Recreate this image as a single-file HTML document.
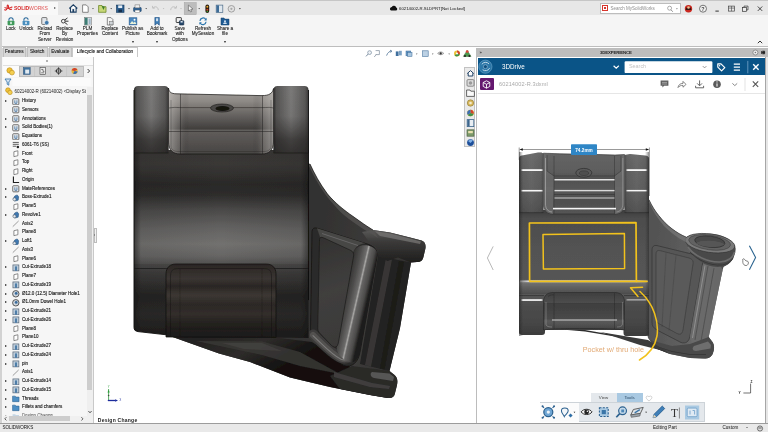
<!DOCTYPE html>
<html lang="en">
<head>
<meta charset="utf-8">
<title>SOLIDWORKS - 60214002-R.SLDPRT</title>
<style>
*{box-sizing:border-box;margin:0;padding:0}
html,body{width:768px;height:432px;overflow:hidden;background:#fff}
body{font-family:"Liberation Sans",sans-serif;color:#222;position:relative}
.abs{position:absolute}
#titlebar{left:0;top:0;width:768px;height:15px;background:#e7e7e7;border-top:1.5px solid #c6c6c6}
#logo{left:2px;top:1.5px;width:56px;height:13px;background:#f8f8f8}
#ribbon{left:0;top:15px;width:768px;height:32.400px;background:#f5f5f5;border-bottom:1px solid #bdbdbd}
#leftedge{left:0;top:0;width:2px;height:423px;background:#d2d2d2}
.rb{-webkit-text-stroke:.1px #222;position:absolute;top:0;width:30px;margin-left:-15px;text-align:center;font-size:4.600px;line-height:5.300px;color:#1c1c1c;white-space:nowrap}
.rb svg{display:block;margin:2.2px auto 0.2px;width:10px;height:8.6px}
.rb b{position:absolute;left:0;width:30px;top:25px;font-weight:normal;font-size:3.500px;line-height:4px;color:#333}
#tabs{left:2px;top:47.400px;height:9.5px;width:136px}
.tab{-webkit-text-stroke:.12px #222;position:absolute;top:0;height:9.200px;background:#d8d8d8;border:0.5px solid #c0c0c0;border-bottom:none;font-size:4.700px;line-height:8.600px;text-align:center;color:#222;white-space:nowrap}
.tab.on{background:#fff;border-color:#c8c8c8;color:#111}
#lpanel{left:2px;top:57px;width:91.5px;height:366px;background:#f6f6f6;border-right:1px solid #c9c9c9}
.tr{position:absolute;left:0;height:8.75px;width:88px;white-space:nowrap;overflow:hidden;font-size:4.500px;line-height:8.750px;color:#111;-webkit-text-stroke:.12px #222}
.tr span{position:absolute;left:22px;top:0}
.tr .ti{position:absolute;left:12.2px;top:0.7px;width:7.6px;height:7.6px}
.tr .ex{position:absolute;left:5.4px;top:3.2px;width:0;height:0;border-left:2.1px solid #222;border-top:1.5px solid transparent;border-bottom:1.5px solid transparent}
#status{left:0;top:422.5px;width:768px;height:9.5px;background:#e9e9e9;border-top:1px solid #9c9c9c;font-size:4.6px;line-height:8.5px;color:#111}
#xp{left:475.5px;top:47.5px;width:292.5px;height:375px;background:#fff;border-left:1px solid #bcbcbc}
#xphead{left:476px;top:47.5px;width:292px;height:9px;background:#bdbdbd;font-size:4.3px;line-height:9px;font-weight:bold;color:#222}
#xpblue{left:478px;top:57.5px;width:288px;height:17.5px;background:#0a5487}
#xpright{left:765.400px;top:57px;width:2.600px;height:365.500px;background:#e6e6e6;border-left:0.900px solid #a6a6a6}
.vt{position:absolute;left:463.5px;top:67px;width:11.5px;height:80px;background:#eaeaea;border:0.5px solid #c2c2c2}
.vt i{position:absolute;left:1.5px;width:8px;height:8px;border-radius:1.5px}
</style>
</head>
<body>
<div id="app" style="position:absolute;left:0;top:0;width:768px;height:432px;overflow:hidden;will-change:transform;opacity:.999">
<!-- ============ title bar ============ -->
<div id="titlebar" class="abs"></div>
<div id="logo" class="abs">
  <svg class="abs" style="left:1.5px;top:2.5px;width:9px;height:8px" viewBox="0 0 9 8"><path d="M0.6 5.8 C2.2 6.9 3.4 4.8 3.2 2.2 C3.1 0.8 4.3 0.6 4.4 2 C4.6 4.2 5 6.2 7.6 5.2 M1 3.6 C2.6 4.6 5.4 4.6 8 3" fill="none" stroke="#d62a2a" stroke-width="1.1" stroke-linecap="round"/></svg>
  <span class="abs" style="left:12px;top:2.6px;font-size:5.100px;line-height:8px;font-weight:bold;color:#d62828;letter-spacing:-0.1px">SOLID<span style="font-weight:normal;color:#e05555">WORKS</span></span>
  <i class="abs" style="left:52px;top:5.400px;border-left:2.2px solid #555;border-top:1.7px solid transparent;border-bottom:1.7px solid transparent"></i>
</div>
<svg class="abs" style="left:60px;top:1.5px;width:190px;height:13.5px" viewBox="60 1.5 190 13.5">
  <!-- home -->
  <path d="M69.3 8 L73.3 4.3 L77.3 8 M70.5 7.4 V11.6 H76.1 V7.4" fill="#fff" stroke="#1d3f63" stroke-width="1.1"/>
  <rect x="72.4" y="8.6" width="1.8" height="3" fill="#1d3f63"/>
  <!-- new -->
  <path d="M82.6 4.4 H86.2 L88.2 6.4 V11.8 H82.6 Z" fill="#fff" stroke="#6b6b6b" stroke-width=".8"/>
  <path d="M92.2 7.6 l1.6 0 l-.8 1.2z" fill="#444"/>
  <!-- open -->
  <path d="M98.6 5 H102 L103 6.2 H106 V11.8 H98.6 Z" fill="#c8d878" stroke="#6f8a2a" stroke-width=".8"/>
  <path d="M101.5 5.2 L104.8 6.2 L103.5 9.5 Z" fill="#3f7d2a"/>
  <path d="M110.4 7.6 l1.6 0 l-.8 1.2z" fill="#444"/>
  <!-- save -->
  <rect x="116.6" y="4.6" width="7.4" height="7.2" fill="#2d5f90" stroke="#183d62" stroke-width=".7"/>
  <rect x="118.2" y="4.9" width="4" height="2.6" fill="#e6eef6"/><rect x="118.4" y="9" width="3.6" height="2.6" fill="#16304d"/>
  <path d="M128.2 7.6 l1.6 0 l-.8 1.2z" fill="#444"/>
  <!-- print -->
  <rect x="133.6" y="7" width="7.6" height="4" rx=".6" fill="#2e6193" stroke="#1a4066" stroke-width=".6"/>
  <rect x="135" y="4.4" width="4.8" height="3" fill="#f2f2f2" stroke="#666" stroke-width=".5"/><rect x="135" y="9.6" width="4.8" height="2.4" fill="#fff" stroke="#666" stroke-width=".4"/>
  <path d="M145.4 7.6 l1.6 0 l-.8 1.2z" fill="#444"/>
  <!-- undo / redo (disabled) -->
  <path d="M153 7.4 C155 5.4 158 6 158.3 9.6 M152.4 5.4 L152.8 7.8 L155 7.4" fill="none" stroke="#c2c2c2" stroke-width="1"/>
  <path d="M162.8 7.6 l1.6 0 l-.8 1.2z" fill="#bbb"/>
  <path d="M176 7.4 C174 5.4 171 6 170.7 9.6 M176.6 5.4 L176.2 7.8 L174 7.4" fill="none" stroke="#c2c2c2" stroke-width="1"/>
  <path d="M180.2 7.6 l1.6 0 l-.8 1.2z" fill="#bbb"/>
  <!-- select -->
  <rect x="184.2" y="2" width="12" height="12.2" fill="#bdbdbd" stroke="#a5a5a5" stroke-width=".5"/>
  <path d="M188.4 4.6 L193 8.6 L190.8 8.9 L191.6 11 L190.4 11.4 L189.6 9.4 L188.4 10.6 Z" fill="#f4f4f4" stroke="#555" stroke-width=".6"/>
  <path d="M198.4 7.6 l1.6 0 l-.8 1.2z" fill="#444"/>
  <!-- traffic light -->
  <rect x="205.4" y="4" width="3.8" height="8.4" rx="1.9" fill="#2a1c10"/><circle cx="207.3" cy="6.2" r="1" fill="#f0b030"/><circle cx="207.3" cy="9.2" r="1" fill="#d84020"/><circle cx="207.3" cy="11" r=".7" fill="#3a3"/>
  <!-- panel -->
  <rect x="216.2" y="4.6" width="6.6" height="7.4" fill="#dfe7ee" stroke="#4c6b88" stroke-width=".7"/><rect x="216.4" y="4.8" width="2.6" height="7" fill="#3f6d97"/>
  <!-- options -->
  <circle cx="231.4" cy="8.3" r="3.3" fill="#e2e2e2" stroke="#9a9a9a" stroke-width=".9"/><circle cx="231.4" cy="8.3" r="1.1" fill="#a8a8a8"/>
  <path d="M239 7.6 l1.8 0 l-.9 1.3z" fill="#444"/>
</svg>
<!-- document title -->
<svg class="abs" style="left:388.5px;top:5px;width:9px;height:6px" viewBox="0 0 9 6"><path d="M2 5.6 H7.2 A1.6 1.6 0 0 0 7.2 2.6 A2.4 2.4 0 0 0 2.8 2 A1.9 1.9 0 0 0 2 5.6 Z" fill="#111"/></svg>
<span class="abs" style="left:399px;top:4.900px;font-size:4.300px;line-height:8px;color:#111;white-space:nowrap">60214002-R.SLDPRT[Not Locked]</span>
<!-- search -->
<div class="abs" style="left:600px;top:3px;width:80.5px;height:10.5px;background:#fff;border:0.5px solid #bdbdbd"></div>
<div class="abs" style="left:601.5px;top:4.6px;width:6.6px;height:6.6px;background:#d8352d"></div>
<div class="abs" style="left:603px;top:6px;width:3.6px;height:3.8px;border:.7px solid #fff"></div>
<span class="abs" style="left:610.500px;top:5px;font-size:4.500px;line-height:8px;color:#8c8c8c;white-space:nowrap">Search MySolidWorks</span>
<svg class="abs" style="left:666px;top:4.5px;width:14px;height:8px" viewBox="0 0 14 8"><circle cx="3.6" cy="3.2" r="2" fill="none" stroke="#8a8a8a" stroke-width=".7"/><path d="M5 4.8 L6.8 6.8" stroke="#8a8a8a" stroke-width=".9"/><path d="M10 3.2 l1.8 0 l-.9 1.3z" fill="#777"/></svg>
<!-- window buttons -->
<svg class="abs" style="left:682px;top:1.5px;width:86px;height:13.5px" viewBox="682 1.5 86 13.5">
  <circle cx="688.5" cy="8.2" r="3.7" fill="#c9271f"/><path d="M685.6 9.4 A2.9 2.9 0 0 1 691.4 9.4 Z" fill="#3a1510"/><circle cx="688.5" cy="7" r="1.3" fill="#f0c090"/>
  <circle cx="703" cy="8.2" r="3.5" fill="#f2f2f2" stroke="#555" stroke-width=".8"/>
  <text x="703" y="10.1" font-size="5.4" font-weight="bold" text-anchor="middle" fill="#444" font-family="Liberation Sans, sans-serif">?</text>
  <path d="M715.4 10.6 H718.8" stroke="#333" stroke-width="1"/>
  <rect x="728.6" y="5.6" width="5.8" height="5" fill="none" stroke="#444" stroke-width=".7"/><path d="M728.6 7.6 H734.4 M731.5 5.6 V10.6" stroke="#444" stroke-width=".6"/>
  <rect x="742.6" y="7" width="4" height="3.8" fill="#eee" stroke="#333" stroke-width=".7"/><path d="M744 7 V5.6 H748 V9.4 H746.6" fill="none" stroke="#333" stroke-width=".7"/>
  <path d="M757.8 6 L762.2 10.4 M762.2 6 L757.8 10.4" stroke="#333" stroke-width=".9"/>
</svg>

<!-- ============ ribbon ============ -->
<div id="ribbon" class="abs">
  <div class="rb" style="left:10.8px"><svg viewBox="0 0 10 9"><path d="M2.8 4 V3 A2.2 2.2 0 0 1 7.2 3 V4" fill="none" stroke="#2c6b9c" stroke-width="1.1"/><rect x="1.4" y="3.8" width="7.2" height="4.8" rx="1" fill="#3f9a5a"/><rect x="4.2" y="5" width="1.6" height="2.4" fill="#e8f4ea"/></svg>Lock</div>
  <div class="rb" style="left:26.4px"><svg viewBox="0 0 10 9"><path d="M2.8 4 V3 A2.2 2.2 0 0 1 7.2 3" fill="none" stroke="#2c6b9c" stroke-width="1.1"/><rect x="1.4" y="3.8" width="7.2" height="4.8" rx="1" fill="#4a8fbe"/><rect x="4.2" y="5" width="1.6" height="2.4" fill="#e8f0f8"/></svg>Unlock</div>
  <div class="rb" style="left:44.8px"><svg viewBox="0 0 10 9"><rect x="1.6" y="0.6" width="5.4" height="7.2" rx=".8" fill="#e3e6ea" stroke="#555" stroke-width=".8"/><circle cx="6.8" cy="6" r="2.3" fill="#3f78aa" stroke="#fff" stroke-width=".5"/></svg>Reload<br>From<br>Server</div>
  <div class="rb" style="left:64.6px"><svg viewBox="0 0 10 9"><path d="M7.6 1 L3 4.4 L7.6 8 M3 4.4 L8.6 4.4" fill="none" stroke="#2b2b2b" stroke-width="1"/><circle cx="3.2" cy="4.4" r="1.9" fill="#f4f4f4" stroke="#2b2b2b" stroke-width=".9"/></svg>Replace<br>By<br>Revision</div>
  <div class="rb" style="left:87.5px"><svg viewBox="0 0 10 9"><rect x="1.4" y="0.6" width="7.2" height="7.8" fill="#e8ecef" stroke="#777" stroke-width=".6"/><rect x="1.6" y="0.8" width="3" height="7.4" fill="#3d7d74"/><rect x="5.6" y="1.6" width="2.2" height="5.8" fill="#9db4c6"/></svg>PLM<br>Properties</div>
  <div class="rb" style="left:110px"><svg viewBox="0 0 10 9"><path d="M2.2 0.6 H6 L8 2.6 V8.4 H2.2 Z" fill="#f4f4f4" stroke="#666" stroke-width=".8"/><rect x="4.6" y="4.6" width="3.6" height="3.6" fill="#cfd4d8" stroke="#666" stroke-width=".5"/></svg>Replace<br>Content</div>
  <div class="rb" style="left:132.6px"><svg viewBox="0 0 10 9"><rect x="1" y="0.8" width="8" height="7.4" fill="#4a88bf" stroke="#2a5e92" stroke-width=".7"/><path d="M1.6 7.4 L4 4.2 L5.6 6 L7 4.8 L8.6 7.4 Z" fill="#e9f2d8"/><circle cx="6.6" cy="2.8" r="1" fill="#fff"/></svg>Publish as<br>Picture<b>▾</b></div>
  <div class="rb" style="left:157px"><svg viewBox="0 0 10 9"><path d="M2.8 0.4 H7.4 V8.6 L5.1 6.6 L2.8 8.6 Z" fill="#3f7fb8" stroke="#1f4f82" stroke-width=".7"/><rect x="4" y="1.4" width="2.2" height="3" fill="#cfe0f0"/></svg>Add to<br>Bookmark<b>▾</b></div>
  <div class="rb" style="left:179.8px"><svg viewBox="0 0 10 9"><rect x="1" y="0.6" width="5.4" height="5.2" rx=".6" fill="#f2f2f2" stroke="#222" stroke-width=".9"/><rect x="4.4" y="3.8" width="4.6" height="4.6" rx=".6" fill="#27496d" stroke="#14283f" stroke-width=".6"/><rect x="5.6" y="4.2" width="2.2" height="1.6" fill="#dfe8f0"/></svg>Save<br>with<br>Options</div>
  <div class="rb" style="left:203px"><svg viewBox="0 0 10 9"><path d="M1.8 4 A3.3 3.3 0 0 1 8 2.8 M8.2 5 A3.3 3.3 0 0 1 2 6.2" fill="none" stroke="#2d77ae" stroke-width="1.3"/><path d="M8.8 0.8 V3.6 H6.2 Z M1.2 8.2 V5.4 H3.8 Z" fill="#2d77ae"/></svg>Refresh<br>MySession</div>
  <div class="rb" style="left:225px"><svg viewBox="0 0 10 9"><path d="M0.8 1 H4 L4.8 2.2 H9.2 V8.4 H0.8 Z" fill="#1f5b94" stroke="#133e68" stroke-width=".5"/><circle cx="5" cy="4.4" r="1.1" fill="#cfe0f0"/><path d="M3 7.4 A2 1.8 0 0 1 7 7.4 Z" fill="#cfe0f0"/></svg>Share a<br>file<b>▾</b></div>
  <svg class="abs" style="left:757px;top:24.5px;width:6px;height:4px" viewBox="0 0 6 4"><path d="M0.8 3.2 L3 1 L5.2 3.2" fill="none" stroke="#333" stroke-width="1"/></svg>
</div>

<!-- ============ command manager tabs ============ -->
<div id="tabs" class="abs">
  <div style="position:absolute;left:0;top:0.500px;width:71px;height:8.700px;background:#d6d6d6"></div>
  <div class="tab" style="left:1px;width:22.5px">Features</div>
  <div class="tab" style="left:25px;width:20.5px">Sketch</div>
  <div class="tab" style="left:47px;width:22.5px">Evaluate</div>
  <div class="tab on" style="left:70px;width:66px">Lifecycle and Collaboration</div>
</div>

<!-- heads-up view toolbar -->
<svg class="abs" style="left:340px;top:48px;width:135px;height:12px" viewBox="340 48 135 12">
  <circle cx="369.6" cy="52.6" r="1.9" fill="#eef2f6" stroke="#7b8ea0" stroke-width=".7"/><path d="M368.2 54 L366 56.4" stroke="#7b8ea0" stroke-width="1"/>
  <path d="M375.6 50.6 H379.4 V54.6 H375.6 M374.2 57 L376.4 54.4" fill="none" stroke="#8a97a4" stroke-width=".8"/>
  <path d="M386.6 55.6 C387.4 52.6 389.8 51.2 391.4 51 M390 50.2 L391.8 51 L390.6 52.6" fill="none" stroke="#5d7e9e" stroke-width=".9"/>
  <rect x="395.8" y="51.4" width="2.8" height="4.6" fill="#3f6f9d"/><rect x="399" y="50.8" width="2.8" height="4.6" fill="#7aa0c2"/>
  <rect x="406" y="51" width="4.8" height="4.8" fill="#6a9cc8" stroke="#3a6a98" stroke-width=".5"/><rect x="407.6" y="52.4" width="4.4" height="4" fill="#a9c6df" stroke="#3a6a98" stroke-width=".5"/>
  <path d="M416 53.6 l1.5 0 l-.75 1.1z" fill="#555"/>
  <rect x="422.6" y="50.8" width="5.6" height="5.6" fill="#bcd1e4" stroke="#4a759d" stroke-width=".6"/>
  <path d="M432 53.6 l1.5 0 l-.75 1.1z" fill="#555"/>
  <path d="M437.6 53.4 C439.4 51.4 442 51.4 443.8 53.4 C442 55.2 439.4 55.2 437.6 53.4 Z" fill="#d9d9d9" stroke="#666" stroke-width=".5"/><circle cx="440.7" cy="53.4" r="1.1" fill="#333"/>
  <path d="M448.4 53.6 l1.5 0 l-.75 1.1z" fill="#555"/>
  <circle cx="457" cy="53.4" r="3" fill="#e8c33a"/><path d="M457 53.4 L457 50.4 A3 3 0 0 1 459.8 54.4 Z" fill="#d3432e"/><path d="M457 53.4 L459.8 54.4 A3 3 0 0 1 454.6 55.2 Z" fill="#3f8f4a"/><circle cx="457" cy="53.4" r="1" fill="#fff"/>
  <path d="M463.4 56.4 L467.2 50.4 L471 56.4 Z" fill="#4d9a4d" stroke="#2c5c2c" stroke-width=".5"/><circle cx="467.2" cy="51.6" r="1.4" fill="#d94a38"/><circle cx="465" cy="56" r="1" fill="#222"/><circle cx="469.4" cy="56" r="1" fill="#222"/>
</svg>

<!-- ============ left feature manager ============ -->
<div id="lpanel" class="abs"></div>
<div class="abs" style="left:2.5px;top:57px;width:90.5px;height:8.5px;background:#fbfbfb;border-bottom:0.5px solid #e0e0e0"></div>
<div class="abs" style="left:46px;top:60.3px;width:1.6px;height:1.6px;background:#999;border-radius:1px"></div>
<div class="abs" style="left:18.5px;top:65.5px;width:65px;height:11px;background:#d3d3d3;border:0.5px solid #bcbcbc"></div>
<div class="abs" style="left:3px;top:65.5px;width:15.5px;height:11.5px;background:#fbfbfb"></div>
<svg class="abs" style="left:2px;top:65px;width:92px;height:34px" viewBox="2 65 92 34">
  <path d="M34.6 66 V76.4 M50.6 66 V76.4 M66.6 66 V76.4" stroke="#bdbdbd" stroke-width=".5"/>
  <!-- part icons -->
  <circle cx="9.6" cy="70.4" r="2.7" fill="#f0c23a" stroke="#b98a14" stroke-width=".6"/><circle cx="12" cy="72.6" r="2.4" fill="#f4cf52" stroke="#b98a14" stroke-width=".6"/>
  <rect x="23.4" y="67.6" width="6.8" height="6.8" fill="#3f709c" stroke="#2a5178" stroke-width=".5"/><rect x="25.2" y="69.6" width="4" height="4" fill="#e3ebf2"/>
  <rect x="40" y="67.6" width="5.4" height="6.8" fill="#ededed" stroke="#444" stroke-width=".6"/><path d="M41.2 69.4 H43 V71.4 H44.4 M41.2 72.8 H44.2" stroke="#333" stroke-width=".6" fill="none"/>
  <circle cx="58.6" cy="71" r="2.3" fill="#f4f4f4" stroke="#222" stroke-width=".9"/><path d="M58.6 67.2 V74.8 M54.8 71 H62.4" stroke="#222" stroke-width=".7"/>
  <circle cx="74.6" cy="71" r="3.1" fill="#e5b93a"/><path d="M74.6 71 L71.6 70.2 A3.1 3.1 0 0 1 77.4 69.8 Z" fill="#d2402c"/><path d="M74.6 71 L77.6 71.6 A3.1 3.1 0 0 1 73 73.6 Z" fill="#3b6fb0"/>
  <path d="M87.6 69 L89.6 71 L87.6 73" fill="none" stroke="#222" stroke-width=".9"/>
  <!-- filter -->
  <path d="M5 79 H11 L8.8 82 V85.2 L7.2 84.2 V82 Z" fill="#dbe8f4" stroke="#2d6ea8" stroke-width=".8"/>
  <rect x="12.5" y="78" width="78" height="8" fill="#fbfbfb"/>
  <!-- root -->
  <circle cx="8" cy="90.2" r="2.4" fill="#f0c23a" stroke="#b98a14" stroke-width=".6"/><circle cx="10" cy="92.4" r="2.2" fill="#f4cf52" stroke="#b98a14" stroke-width=".6"/>
  <path d="M88 92.4 L89.6 90.6 L91.2 92.4" fill="none" stroke="#333" stroke-width=".8"/>
</svg>
<span class="abs" style="left:14.5px;top:87.6px;font-size:4.5px;line-height:8px;color:#202020;white-space:nowrap;letter-spacing:-0.05px">60214002-R (60214002) &lt;Display St</span>
<div class="abs" style="left:2.5px;top:95.5px;width:85px;height:320.500px;overflow:hidden">
 <div style="position:absolute;left:-2.5px;top:-95.5px">
<div class="tr" style="top:97.00px"><i class="ex"></i><svg class="ti" viewBox="0 0 8 8"><rect x="0.8" y="0.8" width="6.4" height="6.4" rx=".8" fill="#f2f2f2" stroke="#555" stroke-width=".9"/><path d="M3 2.4 V5.6 H5.2 V2.4" fill="none" stroke="#3d6f9e" stroke-width=".9"/></svg><span>History</span></div>
<div class="tr" style="top:105.75px"><svg class="ti" viewBox="0 0 8 8"><rect x="0.8" y="0.8" width="6.4" height="6.4" rx=".8" fill="#f2f2f2" stroke="#555" stroke-width=".9"/><path d="M3 2.4 V5.6 H5.2 V2.4" fill="none" stroke="#3d6f9e" stroke-width=".9"/></svg><span>Sensors</span></div>
<div class="tr" style="top:114.50px"><i class="ex"></i><svg class="ti" viewBox="0 0 8 8"><rect x="0.8" y="0.8" width="6.4" height="6.4" rx=".8" fill="#f2f2f2" stroke="#555" stroke-width=".9"/><path d="M3 2.4 V5.6 H5.2 V2.4" fill="none" stroke="#3d6f9e" stroke-width=".9"/></svg><span>Annotations</span></div>
<div class="tr" style="top:123.25px"><i class="ex"></i><svg class="ti" viewBox="0 0 8 8"><rect x="0.8" y="0.8" width="6.4" height="6.4" rx=".8" fill="#f2f2f2" stroke="#555" stroke-width=".9"/><path d="M3 2.4 V5.6 H5.2 V2.4" fill="none" stroke="#3d6f9e" stroke-width=".9"/></svg><span>Solid Bodies(1)</span></div>
<div class="tr" style="top:132.00px"><svg class="ti" viewBox="0 0 8 8"><rect x="0.8" y="0.8" width="6.4" height="6.4" rx=".8" fill="#f2f2f2" stroke="#555" stroke-width=".9"/><path d="M3 2.4 V5.6 H5.2 V2.4" fill="none" stroke="#3d6f9e" stroke-width=".9"/></svg><span>Equations</span></div>
<div class="tr" style="top:140.75px"><svg class="ti" viewBox="0 0 8 8"><path d="M0.8 1.5 H7.2 M0.8 3.5 H7.2 M0.8 5.5 H4.5" stroke="#444" stroke-width=".9"/><circle cx="6.2" cy="6.3" r="1.3" fill="#222"/></svg><span>6061-T6 (SS)</span></div>
<div class="tr" style="top:149.50px"><svg class="ti" viewBox="0 0 8 8"><path d="M2 1.8 L6.2 0.8 V6 L2 7 Z" fill="#fff" stroke="#6a6a6a" stroke-width=".8"/></svg><span>Front</span></div>
<div class="tr" style="top:158.25px"><svg class="ti" viewBox="0 0 8 8"><path d="M2 1.8 L6.2 0.8 V6 L2 7 Z" fill="#fff" stroke="#6a6a6a" stroke-width=".8"/></svg><span>Top</span></div>
<div class="tr" style="top:167.00px"><svg class="ti" viewBox="0 0 8 8"><path d="M2 1.8 L6.2 0.8 V6 L2 7 Z" fill="#fff" stroke="#6a6a6a" stroke-width=".8"/></svg><span>Right</span></div>
<div class="tr" style="top:175.75px"><svg class="ti" viewBox="0 0 8 8"><path d="M1.5 0.5 V6.8 H7.5" fill="none" stroke="#222" stroke-width="1.2"/></svg><span>Origin</span></div>
<div class="tr" style="top:184.50px"><i class="ex"></i><svg class="ti" viewBox="0 0 8 8"><rect x="0.8" y="0.8" width="6.4" height="6.4" rx=".8" fill="#f2f2f2" stroke="#555" stroke-width=".9"/><path d="M3 2.4 V5.6 H5.2 V2.4" fill="none" stroke="#3d6f9e" stroke-width=".9"/></svg><span>MateReferences</span></div>
<div class="tr" style="top:193.25px"><i class="ex"></i><svg class="ti" viewBox="0 0 8 8"><path d="M1 5.5 L3 2 L5.5 1 L7 3 L6.5 6.5 L3 7.5 Z" fill="#3f78b0" stroke="#24507c" stroke-width=".6"/><circle cx="2.6" cy="5.6" r="1.6" fill="#dfe8f2" stroke="#555" stroke-width=".5"/></svg><span>Boss-Extrude1</span></div>
<div class="tr" style="top:202.00px"><svg class="ti" viewBox="0 0 8 8"><path d="M2 1.8 L6.2 0.8 V6 L2 7 Z" fill="#fff" stroke="#6a6a6a" stroke-width=".8"/></svg><span>Plane5</span></div>
<div class="tr" style="top:210.75px"><i class="ex"></i><svg class="ti" viewBox="0 0 8 8"><path d="M1 5.5 L3 2 L5.5 1 L7 3 L6.5 6.5 L3 7.5 Z" fill="#3f78b0" stroke="#24507c" stroke-width=".6"/><circle cx="2.6" cy="5.6" r="1.6" fill="#dfe8f2" stroke="#555" stroke-width=".5"/></svg><span>Revolve1</span></div>
<div class="tr" style="top:219.50px"><svg class="ti" viewBox="0 0 8 8"><path d="M0.8 7 L7 1" stroke="#707070" stroke-width=".7"/></svg><span>Axis2</span></div>
<div class="tr" style="top:228.25px"><svg class="ti" viewBox="0 0 8 8"><path d="M2 1.8 L6.2 0.8 V6 L2 7 Z" fill="#fff" stroke="#6a6a6a" stroke-width=".8"/></svg><span>Plane8</span></div>
<div class="tr" style="top:237.00px"><i class="ex"></i><svg class="ti" viewBox="0 0 8 8"><path d="M1 5.5 L3 2 L5.5 1 L7 3 L6.5 6.5 L3 7.5 Z" fill="#3f78b0" stroke="#24507c" stroke-width=".6"/><circle cx="2.6" cy="5.6" r="1.6" fill="#dfe8f2" stroke="#555" stroke-width=".5"/></svg><span>Loft1</span></div>
<div class="tr" style="top:245.75px"><svg class="ti" viewBox="0 0 8 8"><path d="M0.8 7 L7 1" stroke="#707070" stroke-width=".7"/></svg><span>Axis3</span></div>
<div class="tr" style="top:254.50px"><svg class="ti" viewBox="0 0 8 8"><path d="M2 1.8 L6.2 0.8 V6 L2 7 Z" fill="#fff" stroke="#6a6a6a" stroke-width=".8"/></svg><span>Plane6</span></div>
<div class="tr" style="top:263.25px"><i class="ex"></i><svg class="ti" viewBox="0 0 8 8"><rect x="1" y="1" width="6.2" height="6.2" fill="#c9d6e2" stroke="#5a6b7c" stroke-width=".8"/><rect x="3" y="2.5" width="2.4" height="4.7" fill="#4f7ea8"/></svg><span>Cut-Extrude18</span></div>
<div class="tr" style="top:272.00px"><svg class="ti" viewBox="0 0 8 8"><path d="M2 1.8 L6.2 0.8 V6 L2 7 Z" fill="#fff" stroke="#6a6a6a" stroke-width=".8"/></svg><span>Plane7</span></div>
<div class="tr" style="top:280.75px"><i class="ex"></i><svg class="ti" viewBox="0 0 8 8"><rect x="1" y="1" width="6.2" height="6.2" fill="#c9d6e2" stroke="#5a6b7c" stroke-width=".8"/><rect x="3" y="2.5" width="2.4" height="4.7" fill="#4f7ea8"/></svg><span>Cut-Extrude19</span></div>
<div class="tr" style="top:289.50px"><i class="ex"></i><svg class="ti" viewBox="0 0 8 8"><circle cx="4" cy="4" r="3.4" fill="#cfd6dd" stroke="#444" stroke-width=".9"/><circle cx="4.4" cy="3.6" r="1.5" fill="#3a6c9c"/></svg><span>Ø12.0 (12.5) Diameter Hole1</span></div>
<div class="tr" style="top:298.25px"><i class="ex"></i><svg class="ti" viewBox="0 0 8 8"><circle cx="4" cy="4" r="3.4" fill="#cfd6dd" stroke="#444" stroke-width=".9"/><circle cx="4.4" cy="3.6" r="1.5" fill="#3a6c9c"/></svg><span>Ø1.0mm Dowel Hole1</span></div>
<div class="tr" style="top:307.00px"><i class="ex"></i><svg class="ti" viewBox="0 0 8 8"><rect x="1" y="1" width="6.2" height="6.2" fill="#c9d6e2" stroke="#5a6b7c" stroke-width=".8"/><rect x="3" y="2.5" width="2.4" height="4.7" fill="#4f7ea8"/></svg><span>Cut-Extrude21</span></div>
<div class="tr" style="top:315.75px"><i class="ex"></i><svg class="ti" viewBox="0 0 8 8"><rect x="1" y="1" width="6.2" height="6.2" fill="#c9d6e2" stroke="#5a6b7c" stroke-width=".8"/><rect x="3" y="2.5" width="2.4" height="4.7" fill="#4f7ea8"/></svg><span>Cut-Extrude26</span></div>
<div class="tr" style="top:324.50px"><svg class="ti" viewBox="0 0 8 8"><path d="M2 1.8 L6.2 0.8 V6 L2 7 Z" fill="#fff" stroke="#6a6a6a" stroke-width=".8"/></svg><span>Plane8</span></div>
<div class="tr" style="top:333.25px"><svg class="ti" viewBox="0 0 8 8"><path d="M2 1.8 L6.2 0.8 V6 L2 7 Z" fill="#fff" stroke="#6a6a6a" stroke-width=".8"/></svg><span>Plane10</span></div>
<div class="tr" style="top:342.00px"><i class="ex"></i><svg class="ti" viewBox="0 0 8 8"><rect x="1" y="1" width="6.2" height="6.2" fill="#c9d6e2" stroke="#5a6b7c" stroke-width=".8"/><rect x="3" y="2.5" width="2.4" height="4.7" fill="#4f7ea8"/></svg><span>Cut-Extrude27</span></div>
<div class="tr" style="top:350.75px"><i class="ex"></i><svg class="ti" viewBox="0 0 8 8"><rect x="1" y="1" width="6.2" height="6.2" fill="#c9d6e2" stroke="#5a6b7c" stroke-width=".8"/><rect x="3" y="2.5" width="2.4" height="4.7" fill="#4f7ea8"/></svg><span>Cut-Extrude24</span></div>
<div class="tr" style="top:359.50px"><i class="ex"></i><svg class="ti" viewBox="0 0 8 8"><rect x="1" y="1" width="6.2" height="6.2" fill="#c9d6e2" stroke="#5a6b7c" stroke-width=".8"/><rect x="3" y="2.5" width="2.4" height="4.7" fill="#4f7ea8"/></svg><span>pin</span></div>
<div class="tr" style="top:368.25px"><svg class="ti" viewBox="0 0 8 8"><path d="M0.8 7 L7 1" stroke="#707070" stroke-width=".7"/></svg><span>Axis1</span></div>
<div class="tr" style="top:377.00px"><i class="ex"></i><svg class="ti" viewBox="0 0 8 8"><rect x="1" y="1" width="6.2" height="6.2" fill="#c9d6e2" stroke="#5a6b7c" stroke-width=".8"/><rect x="3" y="2.5" width="2.4" height="4.7" fill="#4f7ea8"/></svg><span>Cut-Extrude14</span></div>
<div class="tr" style="top:385.75px"><i class="ex"></i><svg class="ti" viewBox="0 0 8 8"><rect x="1" y="1" width="6.2" height="6.2" fill="#c9d6e2" stroke="#5a6b7c" stroke-width=".8"/><rect x="3" y="2.5" width="2.4" height="4.7" fill="#4f7ea8"/></svg><span>Cut-Extrude15</span></div>
<div class="tr" style="top:394.50px"><i class="ex"></i><svg class="ti" viewBox="0 0 8 8"><path d="M0.6 1.2 H3.4 L4 2.2 H7.4 V7 H0.6 Z" fill="#4d8fc4" stroke="#2c628f" stroke-width=".6"/></svg><span>Threads</span></div>
<div class="tr" style="top:403.25px"><i class="ex"></i><svg class="ti" viewBox="0 0 8 8"><path d="M0.6 1.2 H3.4 L4 2.2 H7.4 V7 H0.6 Z" fill="#4d8fc4" stroke="#2c628f" stroke-width=".6"/></svg><span>Fillets and chamfers</span></div>
 <div class="tr" style="top:412px;color:#b5b5b5"><i class="ex" style="border-left-color:#aaa"></i><svg class="ti" viewBox="0 0 8 8"><path d="M0.6 1.2 H3.4 L4 2.2 H7.4 V7 H0.6 Z" fill="#c5d6e4"/></svg><span>Design Change</span></div>
 </div>
</div>
<!-- tree scrollbars -->
<div class="abs" style="left:86.500px;top:87px;width:6.500px;height:329px;background:#efefef"></div>
<div class="abs" style="left:87px;top:94.500px;width:5px;height:295px;background:#cdcdcd"></div>
<svg class="abs" style="left:86.800px;top:408.500px;width:6px;height:6px" viewBox="0 0 6 6"><path d="M1.4 2 L3 3.8 L4.6 2" fill="none" stroke="#333" stroke-width=".8"/></svg>
<div class="abs" style="left:2.5px;top:416px;width:90.5px;height:6.500px;background:#f0f0f0"></div>
<div class="abs" style="left:8.5px;top:416.400px;width:61px;height:4.600px;background:#cdcdcd"></div>
<svg class="abs" style="left:2px;top:415px;width:90px;height:8px" viewBox="0 0 90 8"><path d="M4.4 2.2 L2.8 3.8 L4.4 5.4 M79.4 2.2 L81 3.8 L79.4 5.4" fill="none" stroke="#333" stroke-width=".8"/></svg>
<!-- splitter handle -->
<div class="abs" style="left:93.5px;top:228px;width:3px;height:15px;background:#f3f3f3;border:0.5px solid #bdbdbd"></div>
<i class="abs" style="left:94.4px;top:234.4px;border-right:1.4px solid #555;border-top:1.1px solid transparent;border-bottom:1.1px solid transparent"></i>

<!-- ============ main viewport model ============ -->
<svg class="abs" style="left:95px;top:60px;width:370px;height:362px" viewBox="95 60 370 362">
<defs>
  <linearGradient id="earH" x1="0" x2="1" y1="0" y2="0">
    <stop offset="0" stop-color="#2b2a29"/><stop offset=".08" stop-color="#555453"/><stop offset=".5" stop-color="#7b7a79"/><stop offset=".9" stop-color="#5a5958"/><stop offset="1" stop-color="#3a3938"/>
  </linearGradient>
  <linearGradient id="earV" x1="0" x2="0" y1="0" y2="1">
    <stop offset="0" stop-color="#1f1d1c" stop-opacity="0"/><stop offset=".45" stop-color="#1f1d1c" stop-opacity=".06"/><stop offset=".62" stop-color="#1f1d1c" stop-opacity=".32"/><stop offset=".8" stop-color="#1f1d1c" stop-opacity=".62"/><stop offset="1" stop-color="#232120" stop-opacity=".8"/>
  </linearGradient>
  <linearGradient id="pockV" x1="0" x2="0" y1="0" y2="1">
    <stop offset="0" stop-color="#a19d99"/><stop offset=".2" stop-color="#8e8a86"/><stop offset=".24" stop-color="#85817d"/><stop offset=".45" stop-color="#5f5c5a"/><stop offset=".62" stop-color="#413f3d"/><stop offset=".64" stop-color="#615e5c"/><stop offset=".85" stop-color="#524f4d"/><stop offset="1" stop-color="#474543"/>
  </linearGradient>
  <linearGradient id="pockSide" x1="0" x2="1" y1="0" y2="0">
    <stop offset="0" stop-color="#cfccc8" stop-opacity=".55"/><stop offset=".1" stop-color="#b5b1ad" stop-opacity=".25"/><stop offset=".2" stop-color="#000" stop-opacity="0"/><stop offset=".8" stop-color="#000" stop-opacity="0"/><stop offset=".9" stop-color="#b5b1ad" stop-opacity=".25"/><stop offset="1" stop-color="#cfccc8" stop-opacity=".5"/>
  </linearGradient>
  <linearGradient id="bodyV" x1="0" x2="0" y1="153" y2="264" gradientUnits="userSpaceOnUse">
    <stop offset="0" stop-color="#383634"/><stop offset=".1" stop-color="#3a3836"/><stop offset=".28" stop-color="#2a2928"/><stop offset=".38" stop-color="#2e2d2c"/><stop offset=".52" stop-color="#4c4b4a"/><stop offset=".68" stop-color="#646362"/><stop offset=".82" stop-color="#72716f"/><stop offset=".93" stop-color="#666564"/><stop offset="1" stop-color="#525150"/>
  </linearGradient>
  <linearGradient id="bodyH" x1="134" x2="308" y1="0" y2="0" gradientUnits="userSpaceOnUse">
    <stop offset="0" stop-color="#111" stop-opacity=".55"/><stop offset=".04" stop-color="#111" stop-opacity=".1"/><stop offset=".5" stop-color="#111" stop-opacity="0"/><stop offset=".96" stop-color="#111" stop-opacity=".1"/><stop offset="1" stop-color="#111" stop-opacity=".5"/>
  </linearGradient>
  <linearGradient id="lowV" x1="0" x2="0" y1="264" y2="336" gradientUnits="userSpaceOnUse">
    <stop offset="0" stop-color="#4a4948"/><stop offset=".12" stop-color="#3d3c3b"/><stop offset=".45" stop-color="#242322"/><stop offset=".7" stop-color="#2b2a29"/><stop offset="1" stop-color="#1d1c1b"/>
  </linearGradient>
  <linearGradient id="bpockV" x1="0" x2="0" y1="264" y2="338" gradientUnits="userSpaceOnUse">
    <stop offset="0" stop-color="#2a2624"/><stop offset=".2" stop-color="#3a3532"/><stop offset=".3" stop-color="#2a2624"/><stop offset=".42" stop-color="#3c3733"/><stop offset=".55" stop-color="#2c2826"/><stop offset=".68" stop-color="#322e2b"/><stop offset=".8" stop-color="#24211f"/><stop offset="1" stop-color="#1c1a19"/>
  </linearGradient>
  <linearGradient id="armG" x1="310" x2="420" y1="300" y2="320" gradientUnits="userSpaceOnUse">
    <stop offset="0" stop-color="#333231"/><stop offset=".5" stop-color="#3c3b3a"/><stop offset="1" stop-color="#2b2a29"/>
  </linearGradient>
  <linearGradient id="ribG" x1="353" x2="377" y1="252" y2="257.5" gradientUnits="userSpaceOnUse">
    <stop offset="0" stop-color="#2f2e2d"/><stop offset=".3" stop-color="#4d4c4b"/><stop offset=".52" stop-color="#6c6b6a"/><stop offset=".58" stop-color="#a9a8a6"/><stop offset=".64" stop-color="#666564"/><stop offset=".85" stop-color="#4c4b4a"/><stop offset="1" stop-color="#1f1e1d"/>
  </linearGradient>
  <linearGradient id="floorG" x1="318" x2="352" y1="240" y2="340" gradientUnits="userSpaceOnUse">
    <stop offset="0" stop-color="#333231"/><stop offset=".5" stop-color="#403f3e"/><stop offset="1" stop-color="#3a3938"/>
  </linearGradient>
  <linearGradient id="rwallG" x1="378" x2="410" y1="0" y2="6" gradientUnits="userSpaceOnUse">
    <stop offset="0" stop-color="#2a2928"/><stop offset=".3" stop-color="#403f3e"/><stop offset=".55" stop-color="#323130"/><stop offset=".8" stop-color="#3a3938"/><stop offset="1" stop-color="#222120"/>
  </linearGradient>
  <linearGradient id="flG" x1="0" x2="0" y1="230" y2="262" gradientUnits="userSpaceOnUse">
    <stop offset="0" stop-color="#5a5958"/><stop offset=".35" stop-color="#3c3b3a"/><stop offset="1" stop-color="#1f1e1d"/>
  </linearGradient>
  <linearGradient id="underG" x1="200" x2="230" y1="340" y2="395" gradientUnits="userSpaceOnUse">
    <stop offset="0" stop-color="#242221"/><stop offset=".5" stop-color="#2e2c2a"/><stop offset="1" stop-color="#121110"/>
  </linearGradient>
  <filter id="soft" x="-5%" y="-5%" width="110%" height="110%"><feGaussianBlur stdDeviation=".45"/></filter>
</defs>
<g filter="url(#soft)">
  <!-- arm silhouette -->
  <path d="M306 162 L310 164 C314 173 320 184 327.500 194 C334 202 345 211 352.500 216 C360 221.500 368 227 373 230 L390 232.500 L410 237.500 L421.500 240.600 C425 241.600 426 245 425.400 248.500 L423.400 257 C422.800 260 421 262 417 262 L411 262.500 L400 328 L389.500 371 L394.500 375 C397.500 377.500 397.800 381 397 385 L395 393 C394.400 397 392 398.500 388 398 L370 395 L330 387 L290 377.500 L250 362 L219 353.500 L181 340 L166.500 334.800 L160 300 L306 300 Z" fill="url(#armG)"/>
  <!-- underside sloped dark surface -->
  <path d="M166.500 334.800 L181 340 L219 353.500 L250 362 L290 377.500 L330 387 L370 395 L388 398 L392 390 L352 368 L312 342 L276 337.500 Z" fill="url(#underG)"/>
  <path d="M196 341 L262 341.500 L300 352 L340 374 L300 366 L262 355 Z" fill="#3a3836" opacity=".8"/>
  <path d="M222 343 L262 343 L282 351 L244 349 Z" fill="#4a4745" opacity=".55"/>
  <!-- right wall of arm -->
  <path d="M378 256 L411 262.500 L400 328 L389.500 371 L360 364 Z" fill="url(#rwallG)"/>
  <path d="M386 258 L392 259.500 L371 366.500 L365 365 Z" fill="#4a4948" opacity=".55"/>
  <path d="M399 261 L404 262 L384.500 369.500 L380 368.500 Z" fill="#161514" opacity=".6"/>
  <!-- pocket outer frame -->
  <path d="M312 232 C312 228.500 314 227.400 317 228.200 L366 243.600 C374 246 378.500 249.500 377 257 L360 352 C358.500 362 352 368 344 365.500 C336 362 324 349 313 339.500 C311 337.500 310.500 336 310.500 333 Z" fill="#2c2b2a" stroke="#121110" stroke-width=".7"/>
  <!-- lower fillet band (tube) -->
  <g fill="none" stroke-linecap="round" stroke-linejoin="round">
    <path d="M313 334.500 C322 343 332 354 341 358 C347 360.500 351.500 356 353 349" stroke="#3c3b3a" stroke-width="10"/>
    <path d="M313 335 C322 343.500 332 354.500 341 358.500 C347 361 351.500 356.500 353 349.500" stroke="#525150" stroke-width="6"/>
    <path d="M313 335.600 C322 344 332 355 341 359.200 C347 361.600 352 357 353.500 350" stroke="#7d7c7b" stroke-width="1.100"/>
  </g>
  <!-- rib -->
  <path d="M353 252.500 C356 246.500 362 244 368 245.600 C375 247.600 378.400 251 377 257 L360 352 C358.500 360 354 364 349 362 C343 359.500 336.500 355 336.800 347 L337.200 343 Z" fill="url(#ribG)"/>
  <path d="M317 228.200 L366 243.600 C360 243.500 356 246 353 252.500 L320 237 Z" fill="#474645"/>
  <path d="M322 233.500 L358 245.500" stroke="#6d6c6b" stroke-width=".8" fill="none"/>
  <!-- pocket floor -->
  <path d="M319.500 240 C319.500 237.500 321 236.800 323.500 237.800 L350 250 C353.500 251.600 354 253.500 353.400 257 L338.500 342 C337.600 347.500 335 348.500 331.500 345.500 L320.500 334 C318 331.500 317.600 330 317.800 327 Z" fill="url(#floorG)" stroke="#161514" stroke-width=".6"/>
  <!-- top flange -->
  <path d="M373 230 L390 232.500 L410 237.500 L421.500 240.600 C425 241.600 426 245 425.400 248.500 L423.400 257 C422.800 260 421 262 417 262 L411 262.500 L398 257.500 L387.500 261 L378 256 C378 250 376 246.500 371 244.600 L362 232 Z" fill="url(#flG)"/>
  <path d="M375 231.200 L390 233.500 L410 238.500 L421 241.600 L420 244 L400 240 L380 236 Z" fill="#7a7978" opacity=".7"/>
  <!-- bottom flange -->
  <path d="M352 366 L389.500 371 L394.500 375 C397.500 377.500 397.800 381 397 385 L395 393 C394.400 397 392 398.500 388 398 L370 395 L340 389 L330 376 Z" fill="#2a2928"/>
  <path d="M372 372 L389.500 373.500 L394 377 L393 381 L374 378 C370 377 370 373 372 372 Z" fill="#666564" opacity=".75"/>
  <path d="M334 372 L372 383 L390 386 L389 389 L370 387 L334 377 Z" fill="#454443" opacity=".8"/>
  <!-- arm top surface band -->
  <path d="M310 164 C314 173 320 184 327.500 194 C334 202 345 211 352.500 216 C360 221.500 368 227 373 230 L378 238 C368 232 352 222 344 215 C334 206 322 192 313 174 L308.500 165 Z" fill="#555453" opacity=".8"/>
  <path d="M310 164 C314 173 320 184 327.500 194 C334 202 345 211 352.500 216 C360 221.500 368 227 373 230" fill="none" stroke="#161514" stroke-width=".6"/>

  <!-- main body -->
  <rect x="134" y="150" width="174.500" height="116" fill="url(#bodyV)"/>
  <rect x="134" y="150" width="174.500" height="116" fill="url(#bodyH)"/>
  <!-- lower ears band -->
  <path d="M134 264 H308.500 V338 L276 337.500 L166.500 334.800 L138 331.600 C135 331 134 330 134 327 Z" fill="url(#lowV)"/>
  <path d="M134 264 H308.500 V338 L276 337.500 L166.500 334.800 L138 331.600 C135 331 134 330 134 327 Z" fill="url(#bodyH)"/>
  <path d="M134 268.500 H308.500" stroke="#121110" stroke-width=".6"/>
  <!-- bottom pocket -->
  <path d="M166 337 V274 C166 267.500 170 264 176 264 H266 C272 264 276 267.500 276 274 V337.500 Z" fill="url(#bpockV)" stroke="#0f0e0d" stroke-width=".7"/>
  <path d="M170.500 337 V276 C170.500 270.500 173 268.500 178 268.500 H264 C269 268.500 271.500 270.500 271.500 276 V337" fill="none" stroke="#0f0e0d" stroke-width=".5" opacity=".8"/>
  <path d="M180 268.500 V337 M262 268.500 V337" stroke="#0f0e0d" stroke-width=".4" opacity=".6"/>
  <path d="M170 329 H272" stroke="#0f0e0d" stroke-width=".5" opacity=".7"/>

  <!-- top ears -->
  <path d="M134 153 V90 C134 87.500 135.500 86 138 86 H164.500 C167 86 168.500 87.500 168.500 90 V153 Z" fill="url(#earH)"/>
  <path d="M134 153 V90 C134 87.500 135.500 86 138 86 H164.500 C167 86 168.500 87.500 168.500 90 V153 Z" fill="url(#earV)"/>
  <path d="M273.500 153 V90 C273.500 87.500 275 86 277.500 86 H304.500 C307 86 308.500 87.500 308.500 90 V153 Z" fill="url(#earH)"/>
  <path d="M273.500 153 V90 C273.500 87.500 275 86 277.500 86 H304.500 C307 86 308.500 87.500 308.500 90 V153 Z" fill="url(#earV)"/>
  <!-- top pocket -->
  <path d="M168.500 88 C169 92 171 93.600 176 93.800 L262 95.600 C269 95.600 272.500 93.500 273.500 88.500 V142 C273.500 150 269 154 262 154 H180 C173 154 168.500 150 168.500 142 Z" fill="url(#pockV)"/>
  <path d="M168.500 88 C169 92 171 93.600 176 93.800 L262 95.600 C269 95.600 272.500 93.500 273.500 88.500 V142 C273.500 150 269 154 262 154 H180 C173 154 168.500 150 168.500 142 Z" fill="url(#pockSide)"/>
  <path d="M168.500 88 C169 92 171 93.600 176 93.800 L262 95.600 C269 95.600 272.500 93.500 273.500 88.500 V142 C273.500 150 269 154 262 154 H180 C173 154 168.500 150 168.500 142 Z" fill="none" stroke="#151413" stroke-width=".7"/>
  <path d="M169 108 C176 107 176 107.600 181 107.600 H262 C268 107.600 269 107 273.500 108 M169 131.500 H273.500 M180.500 94 V154 M262.500 95.600 V154" fill="none" stroke="#191817" stroke-width=".55" opacity=".85"/>
  <path d="M171 100 V146 C171 149.500 174 151.500 178 151.500 H264 C268 151.500 271 149.500 271 146 V100" fill="none" stroke="#191817" stroke-width=".45" opacity=".6"/>
  <!-- threaded hole -->
  <ellipse cx="222" cy="108" rx="11.500" ry="4" fill="#4b4846" stroke="#1a1918" stroke-width=".6"/>
  <ellipse cx="222.500" cy="108.600" rx="7" ry="2.500" fill="#131211"/>
  <!-- silhouette edges -->
  <path d="M134 90 V327 C134 330 135 331 138 331.600 L166.500 334.800 M308.500 90 V300" fill="none" stroke="#0e0d0c" stroke-width=".9"/>
  <path d="M134 153 H168.500 M273.500 153 H308.500" stroke="#151413" stroke-width=".6"/>
</g>
<g transform="translate(0.2 4.500)"><!-- triad -->
<path d="M108.400 395.800 V384.500" stroke="#2d9a3a" stroke-width=".8"/><path d="M107.300 388 L108.400 385.200 L109.500 388 Z" fill="#2d9a3a"/>
<path d="M107.600 396 H115.500" stroke="#1c2c9c" stroke-width="1.300"/><path d="M115 394.800 L117.800 396 L115 397.200 Z" fill="#1c2c9c"/>
<circle cx="108.400" cy="391" r=".8" fill="#444"/>
<text x="108.400" y="383.800" font-size="2.600" fill="#2d9a3a" text-anchor="middle" font-family="Liberation Sans, sans-serif">Y</text>
<text x="119.200" y="396.800" font-size="2.600" fill="#1c2c9c" font-family="Liberation Sans, sans-serif">X</text>
</g>
</svg>

<span class="abs" style="left:97.800px;top:417px;font-size:5px;line-height:7px;font-weight:bold;color:#222;white-space:nowrap;letter-spacing:.25px">Design Change</span>

<!-- vertical task-pane toolbar -->
<div class="vt">
  <svg style="position:absolute;left:0;top:0;width:11px;height:80px" viewBox="0 0 11 80">
    <path d="M2.2 5.6 L5.5 2.6 L8.8 5.6 M3.2 5.2 V8 H7.8 V5.2" fill="#fff" stroke="#1d3f63" stroke-width="1"/>
    <rect x="2" y="11.6" width="7" height="6.6" rx="1" fill="#dcdcdc" stroke="#666" stroke-width=".7"/><circle cx="5.5" cy="15" r="1.8" fill="#9a9a9a"/>
    <path d="M1.6 22 H5 L5.8 23.2 H9.4 V28.4 H1.6 Z" fill="#fafafa" stroke="#444" stroke-width=".8"/>
    <circle cx="5.5" cy="35" r="3.2" fill="#d8b85a" stroke="#8a7430" stroke-width=".6"/><circle cx="5.5" cy="35" r="1.3" fill="#f3ead0"/>
    <circle cx="5.5" cy="45" r="3.3" fill="#e8c33a"/><path d="M5.5 45 L5.5 41.7 A3.3 3.3 0 0 1 8.6 46 Z" fill="#d3432e"/><path d="M5.5 45 L8.6 46 A3.3 3.3 0 0 1 2.8 47 Z" fill="#3f8f4a"/><path d="M5.5 45 L2.8 47 A3.3 3.3 0 0 1 5.5 41.7 Z" fill="#3d6fb5"/>
    <rect x="2.2" y="51.6" width="6.6" height="7" fill="#e9eef3" stroke="#3d668d" stroke-width=".8"/><rect x="2.4" y="51.8" width="2.2" height="6.6" fill="#3d668d"/>
    <rect x="2" y="61.8" width="7" height="6.4" fill="#7c9a6a" stroke="#44583a" stroke-width=".6"/><rect x="3.2" y="63" width="4.6" height="2.2" fill="#e8e0b0"/>
    <circle cx="5.5" cy="74.6" r="3.4" fill="#1d4f9a"/><path d="M3 73 A3.4 3.4 0 0 1 8 72.6 L5.5 75 Z" fill="#7fb0e6"/>
  </svg>
</div>

<!-- ============ 3DEXPERIENCE task pane ============ -->
<div id="xp" class="abs"></div>
<div id="xphead" class="abs"><span class="abs" style="left:3.5px;top:0;font-size:4px;letter-spacing:-.3px">»</span><span class="abs" style="left:124px;top:0;letter-spacing:-.12px">3DEXPERIENCE</span>
  <svg class="abs" style="left:275px;top:1px;width:16px;height:7px" viewBox="0 0 16 7"><circle cx="4.4" cy="3.5" r="2.5" fill="#ececec" stroke="#666" stroke-width=".6"/><circle cx="4.4" cy="3.5" r=".8" fill="#777"/><path d="M10.6 2 V5 M10.6 3.5 H14 M11.4 2.2 H13.6 V4.8 H11.4" stroke="#222" stroke-width=".8" fill="#222"/></svg>
</div>
<div id="xpblue" class="abs">
  <svg class="abs" style="left:0;top:0;width:288px;height:17.5px" viewBox="478 57.500 288 17.5">
    <circle cx="485.4" cy="66.2" r="6.6" fill="#2c77a8" stroke="#7fb2d4" stroke-width=".5"/>
    <path d="M481.8 63.8 A4.6 4.6 0 0 1 489 63.4 M482.6 69.2 A4.6 4.6 0 0 0 489.6 67.6" fill="none" stroke="#cfe3f1" stroke-width=".9"/>
    <circle cx="485.4" cy="66.2" r="2" fill="#0d4f7f" stroke="#b5d3e8" stroke-width=".5"/>
    <path d="M613.6 65.200 L616.200 67.600 L618.800 65.200" fill="none" stroke="#fff" stroke-width="1.200"/>
    <rect x="624.6" y="60.800" width="87.800" height="11.800" rx="1.2" fill="#fff"/>
    <path d="M702.800 65.600 L704.600 67.400 L706.400 65.600" fill="none" stroke="#7d7d7d" stroke-width=".8"/>
    <path d="M717.800 63.400 L721 63.400 L724.800 67.200 L721.600 70.400 L717.800 66.600 Z" fill="none" stroke="#fff" stroke-width="1.2" stroke-linejoin="round"/><circle cx="719.6" cy="65.200" r=".7" fill="#fff"/>
    <path d="M733.800 63.600 H740 M733.800 66.600 H740 M733.800 69.600 H740" stroke="#fff" stroke-width="1.2"/>
    <path d="M747.800 60.400 V72.800" stroke="#86b3d3" stroke-width=".7"/>
    <path d="M753.200 63.800 L758.600 69.200 M758.600 63.800 L753.200 69.200" stroke="#fff" stroke-width="1.4"/>
  </svg>
  <span class="abs" style="left:24px;top:4.3px;font-size:6.3px;line-height:9px;color:#fff;white-space:nowrap">3DDrive</span>
  <span class="abs" style="left:151px;top:4.6px;font-size:5.4px;line-height:9px;color:#c2c2c2;white-space:nowrap">Search</span>
</div>
<!-- file row -->
<div class="abs" style="left:479.8px;top:77.8px;width:13.8px;height:12.6px;background:#65186f;border-radius:1px"></div>
<svg class="abs" style="left:482.4px;top:79.8px;width:9px;height:9px" viewBox="0 0 9 9"><path d="M4.500 0.800 L7.800 2.500 V6.400 L4.500 8.200 L1.200 6.400 V2.500 Z M1.200 2.500 L4.500 4.300 L7.800 2.500 M4.500 4.300 V8.200" fill="none" stroke="#fff" stroke-width=".9" stroke-linejoin="round"/></svg>
<span class="abs" style="left:499px;top:80px;font-size:5.6px;line-height:8px;color:#aaa;white-space:nowrap;letter-spacing:.1px">60214002-R.3dxml</span>
<svg class="abs" style="left:655px;top:76px;width:110px;height:17px" viewBox="655 76 110 17">
  <path d="M660.600 80.600 H668.400 V85.800 H664.200 L662.400 87.600 V85.800 H660.600 Z" fill="#5f5f5f"/><path d="M662 82.400 H667 M662 84 H667" stroke="#ddd" stroke-width=".5"/>
  <path d="M678 87.600 C678.400 84.600 680.400 83.400 683 83.400 V81.400 L686 84.400 L683 87.200 V85.400 C681 85.300 679.400 85.800 678 87.600 Z" fill="none" stroke="#6a6a6a" stroke-width=".8" stroke-linejoin="round"/>
  <path d="M699.600 80.400 V85.400 M697.200 83.400 L699.600 85.800 L702 83.400 M695.600 85.800 V87.800 H703.600 V85.800" fill="none" stroke="#555" stroke-width=".9"/>
  <circle cx="717" cy="84.200" r="3.800" fill="#5a5a5a"/><path d="M717 83.400 V86.600" stroke="#fff" stroke-width="1"/><circle cx="717" cy="81.900" r=".6" fill="#fff"/>
  <path d="M732.400 83.400 L734.800 85.600 L737.200 83.400" fill="none" stroke="#7a7a7a" stroke-width=".9"/>
  <path d="M745 78 V91" stroke="#d0d0d0" stroke-width=".6"/>
  <path d="M752.800 81.400 L758.200 86.800 M758.200 81.400 L752.800 86.800" stroke="#555" stroke-width="1.100"/>
</svg>
<div class="abs" style="left:478px;top:93.3px;width:287.500px;height:.5px;background:#e6e6e6"></div>
<svg class="abs" style="left:478px;top:94px;width:287px;height:306px" viewBox="478 94 287 306">
<defs>
  <linearGradient id="m2ear" x1="0" x2="1" y1="0" y2="0">
    <stop offset="0" stop-color="#444"/><stop offset=".1" stop-color="#5e5e5e"/><stop offset=".5" stop-color="#686868"/><stop offset=".9" stop-color="#5e5e5e"/><stop offset="1" stop-color="#4a4a4a"/>
  </linearGradient>
  <linearGradient id="m2earV" x1="0" x2="0" y1="154" y2="213" gradientUnits="userSpaceOnUse">
    <stop offset="0" stop-color="#888" stop-opacity=".18"/><stop offset=".2" stop-color="#666" stop-opacity=".08"/><stop offset=".6" stop-color="#333" stop-opacity=".1"/><stop offset="1" stop-color="#222" stop-opacity=".3"/>
  </linearGradient>
  <linearGradient id="m2pock" x1="0" x2="0" y1="154" y2="214" gradientUnits="userSpaceOnUse">
    <stop offset="0" stop-color="#656565"/><stop offset=".3" stop-color="#5c5c5c"/><stop offset=".42" stop-color="#505050"/><stop offset=".6" stop-color="#595959"/><stop offset=".75" stop-color="#4e4e4e"/><stop offset="1" stop-color="#555"/>
  </linearGradient>
  <linearGradient id="m2body" x1="0" x2="0" y1="212" y2="294" gradientUnits="userSpaceOnUse">
    <stop offset="0" stop-color="#404040"/><stop offset=".08" stop-color="#4d4d4d"/><stop offset=".5" stop-color="#535353"/><stop offset=".82" stop-color="#555"/><stop offset=".86" stop-color="#727272"/><stop offset=".93" stop-color="#5e5e5e"/><stop offset="1" stop-color="#4c4c4c"/>
  </linearGradient>
  <linearGradient id="m2low" x1="0" x2="0" y1="294" y2="335" gradientUnits="userSpaceOnUse">
    <stop offset="0" stop-color="#585858"/><stop offset=".3" stop-color="#4c4c4c"/><stop offset=".7" stop-color="#464646"/><stop offset="1" stop-color="#3c3c3c"/>
  </linearGradient>
  <linearGradient id="m2bp" x1="0" x2="0" y1="292" y2="330" gradientUnits="userSpaceOnUse">
    <stop offset="0" stop-color="#3e3e3e"/><stop offset=".3" stop-color="#4e4e4e"/><stop offset=".34" stop-color="#3f3f3f"/><stop offset=".7" stop-color="#494949"/><stop offset=".76" stop-color="#5a5a5a"/><stop offset="1" stop-color="#444"/>
  </linearGradient>
  <linearGradient id="m2arm" x1="650" x2="725" y1="290" y2="300" gradientUnits="userSpaceOnUse">
    <stop offset="0" stop-color="#535353"/><stop offset=".45" stop-color="#5e5e5e"/><stop offset=".7" stop-color="#6a6a6a"/><stop offset=".85" stop-color="#565656"/><stop offset="1" stop-color="#3e3e3e"/>
  </linearGradient>
  <linearGradient id="m2edge" x1="519" x2="649" y1="0" y2="0" gradientUnits="userSpaceOnUse">
    <stop offset="0" stop-color="#222" stop-opacity=".55"/><stop offset=".03" stop-color="#222" stop-opacity="0"/><stop offset=".97" stop-color="#222" stop-opacity="0"/><stop offset="1" stop-color="#222" stop-opacity=".5"/>
  </linearGradient>
  <linearGradient id="hl" x1="0" x2="1" y1="0" y2="0">
    <stop offset="0" stop-color="#fff" stop-opacity=".2"/><stop offset=".08" stop-color="#fff" stop-opacity=".95"/><stop offset=".92" stop-color="#fff" stop-opacity=".95"/><stop offset="1" stop-color="#fff" stop-opacity=".2"/>
  </linearGradient>
  <filter id="soft2" x="-5%" y="-5%" width="110%" height="110%"><feGaussianBlur stdDeviation=".4"/></filter>
</defs>
<g filter="url(#soft2)">
  <!-- arm -->
  <path d="M647 198 L649 199.700 C652 206 655 211 658.800 215.600 C663 221 667 225 672 228.800 C677 232.500 681 235 686 237 C692 234 700 233 710 233.600 C722 234.500 732 239 735 246 C736 249 735.500 252 734.700 254 C734 258 732 261 728 264 L723.500 267 L722.600 270 L708.700 337 L712.500 342 C714.500 345 714.500 349 713 353 C711.500 357 709 358.600 704 358.600 L690 358 L670 354 L655 348 L648 338 L640 300 Z" fill="url(#m2arm)"/>
  <!-- arm pocket / lines -->
  <path d="M652 250 C652 246.500 654 245 657 245.600 L696 255 C701 256.300 703.500 259 702.500 264 L690 336 C689 342 685.500 344 681 342.500 L657 330 C653.500 328 652 326 652 322 Z" fill="#565656" stroke="#2e2e2e" stroke-width=".6"/>
  <path d="M656 254 C656 251 657.500 250 660 250.600 L689 258 C692.500 259 693.500 261 693 264 L683 330 C682.300 334 680 335 677 333.500 L659.500 324 C657 322.500 656 321 656 318 Z" fill="#5a5a5a" stroke="#333" stroke-width=".5"/>
  <path d="M666 252.500 L662 327 M676 255 L669 330.500" stroke="#333" stroke-width=".4" opacity=".7"/>
  <path d="M702.500 266 C703.500 262 707 261 711 262.500 L721 266.500 L722.600 270 L708.700 337 L696 344 C692 343 689.600 340 690 336 Z" fill="#6a6a6a" opacity=".9"/>
  <path d="M708 266 L695 340 M714 268 L701 341" stroke="#2f2f2f" stroke-width=".5" opacity=".8"/>
  <path d="M705 265.500 L692.500 338" stroke="#ddd" stroke-width=".6" opacity=".55"/>
  <!-- bottom flange -->
  <path d="M690 344 L708.700 337 L712.500 342 C714.500 345 714.500 349 713 353 C711.500 357 709 358.600 704 358.600 L690 358 L670 354 L655 348 L650 340 L672 346 Z" fill="#4a4a4a"/>
  <path d="M694 346 L708 341.500 L711 345 L710.500 348.500 L696 351 C692 351 692 347.500 694 346 Z" fill="#777" opacity=".8"/>
  <path d="M655 346 L672 351.500 L690 354.500 L706 354.500" fill="none" stroke="#2a2a2a" stroke-width=".6"/>
  <!-- boss -->
  <path d="M685.500 239 C686 246 692 254 700 261 C708 267.500 720 268.500 727 265 C732 262 735 256 735.200 248 Z" fill="#4a4a4a"/>
  <path d="M688 247 C694 256 708 262.500 720 262 C728 261.500 733 257.500 734.600 252" fill="none" stroke="#6c6c6c" stroke-width="1.600"/>
  <path d="M690 252 C697 260 710 266 722 265 C728 264 731.500 261 733 258" fill="none" stroke="#2c2c2c" stroke-width=".6"/>
  <ellipse cx="710" cy="243.200" rx="25" ry="9.200" transform="rotate(8 710 243.200)" fill="#7a7a7a" stroke="#2f2f2f" stroke-width=".6"/>
  <ellipse cx="709.600" cy="242.400" rx="21" ry="7.400" transform="rotate(8 709.600 242.400)" fill="#626262" stroke="#3a3a3a" stroke-width=".5"/>
  <ellipse cx="709.800" cy="241.700" rx="15.200" ry="5.600" transform="rotate(7 709.800 241.700)" fill="#484848" stroke="#2a2a2a" stroke-width=".6"/>
  <path d="M696 243 C702 247.500 718 248.500 724.500 244.500 C721 240.500 701 239 696 243 Z" fill="#5a5a5a" opacity=".85"/>
  <path d="M647 198 L649 199.700 C652 206 655 211 658.800 215.600 C663 221 667 225 672 228.800 C677 232.500 681 235 686 237 L690 244 C680 240 670 232 664 226 C658 219 653 211 649.500 203 Z" fill="#777" opacity=".7"/>
  <path d="M649 199.700 C652 206 655 211 658.800 215.600 C663 221 667 225 672 228.800 C677 232.500 681 235 686 237" fill="none" stroke="#2a2a2a" stroke-width=".6"/>

  <!-- underside -->
  <path d="M545 328 L585 330 L622.500 336.600 L648 342 L670 354 L655 348 L624 338 L585 331.500 Z" fill="#2e2e2e"/>
  <path d="M600 332 L648 340 L668 352 L640 345 Z" fill="#3a3a3a"/>
  <!-- body -->
  <rect x="519" y="210" width="130" height="86" fill="url(#m2body)"/>
  <!-- lower ears + pocket -->
  <path d="M519 294 H649 V333 C649 335 648 336 646 336 H626 C624.500 336 623.500 335 623.500 333 V330 H545 V332 C545 334 544 335 542 335 H522 C520 335 519 334 519 332 Z" fill="url(#m2low)"/>
  <path d="M543.500 330 V302 C543.500 296 547 292.500 553 292.500 H615 C621 292.500 624.500 296 624.500 302 V330 C620 329 600 328.500 585 328.500 C570 328.500 550 328.500 543.500 330 Z" fill="url(#m2bp)" stroke="#262626" stroke-width=".6"/>
  <path d="M554 293 V329 M614.500 293 V329 M544 303.700 H624 M548 296.500 C550 295 552 294.800 554 294.800" fill="none" stroke="#242424" stroke-width=".5" opacity=".85"/>
  <path d="M546 302 V324 C546 326 548 327 552 327" fill="none" stroke="#ddd" stroke-width=".5" opacity=".6"/>
  <path d="M622.500 302 V324 C622.500 326 620 327 617 327" fill="none" stroke="#ddd" stroke-width=".5" opacity=".5"/>
  <rect x="552" y="319.400" width="65" height="1.200" fill="#ddd" opacity=".75"/>
  <path d="M519 295.600 H544 M624 295.600 H649" stroke="#262626" stroke-width=".6"/>
  <rect x="521" y="299.200" width="22" height="1.700" fill="url(#hl)"/>
  <rect x="626" y="299.200" width="21" height="1.300" fill="url(#hl)" opacity=".6"/>
  <!-- upper ears -->
  <path d="M519 213 V158.500 C519 156.500 520 155.800 522 155.400 L538 152.600 C541 152.200 543 152.600 543.500 154 V213 Z" fill="url(#m2ear)"/>
  <path d="M519 213 V158.500 C519 156.500 520 155.800 522 155.400 L538 152.600 C541 152.200 543 152.600 543.500 154 V213 Z" fill="url(#m2earV)"/>
  <path d="M624.500 213 V155 L630 154 L645 155.400 C647.500 155.800 649 156.500 649 158.500 V213 Z" fill="url(#m2ear)"/>
  <path d="M624.500 213 V155 L630 154 L645 155.400 C647.500 155.800 649 156.500 649 158.500 V213 Z" fill="url(#m2earV)"/>
  <!-- upper pocket -->
  <path d="M543.500 153.200 L560 153.800 L600 154.600 L615 155 L624.500 154.600 V204 C624.500 210 621 214 615 214 H553 C547 214 543.500 210 543.500 204 Z" fill="url(#m2pock)" stroke="#2a2a2a" stroke-width=".6"/>
  <path d="M543.500 153.200 V204 C543.500 210 547 214 553 214 L554 176 L547 171 V155 Z" fill="#6c6c6c" opacity=".75"/>
  <path d="M624.500 154.600 V204 C624.500 210 621 214 615 214 L614.500 176 L621 171 V156 Z" fill="#6c6c6c" opacity=".75"/>
  <path d="M554 156 V213.500 M614.500 156 V213.500 M547 155 V171 L554 176 H614.500 L621 171 V156 M554 194.500 H614.500" fill="none" stroke="#2a2a2a" stroke-width=".5" opacity=".85"/>
  <path d="M545.500 158 V204 C545.500 209 548 211.500 552 212" fill="none" stroke="#e8e8e8" stroke-width=".55" opacity=".7"/>
  <path d="M622.800 158 V204 C622.800 209 620 211.500 616.500 212" fill="none" stroke="#e8e8e8" stroke-width=".5" opacity=".55"/>
  <rect x="554.500" y="179" width="60" height="1.500" fill="#f2f2f2" opacity=".9"/>
  <rect x="554.500" y="189.900" width="60" height="1.400" fill="#f2f2f2" opacity=".85"/>
  <rect x="554.500" y="197.400" width="60" height="1.200" fill="#e8e8e8" opacity=".7"/>
  <rect x="553" y="207.800" width="63" height="1.600" fill="#fff" opacity=".95"/>
  <!-- ear highlights -->
  <rect x="521" y="169.200" width="22" height="1.800" fill="url(#hl)"/>
  <rect x="521" y="189.900" width="22" height="1.600" fill="url(#hl)"/>
  <rect x="626" y="169.200" width="21.500" height="1.800" fill="url(#hl)"/>
  <rect x="626" y="189.900" width="21.500" height="1.500" fill="url(#hl)"/>
  <!-- hole -->
  <ellipse cx="583.800" cy="172.800" rx="8" ry="4.400" fill="#5a5a5a" stroke="#2c2c2c" stroke-width=".7"/>
  <ellipse cx="584" cy="173.200" rx="4.600" ry="2.300" fill="#505050" stroke="#303030" stroke-width=".5"/>
  <!-- seams -->
  <path d="M519 212.600 H543.500 M624.500 212.600 H649" stroke="#262626" stroke-width=".6"/>
  <rect x="519" y="152" width="130" height="184" fill="url(#m2edge)"/>
  <rect x="520" y="280.400" width="128" height="1.800" fill="url(#hl)" opacity=".9"/>
</g>
<!-- dimension -->
<path d="M519.200 147.500 V160 M649.400 147.500 V196" stroke="#333" stroke-width=".5"/>
<path d="M521 149.500 H648" stroke="#333" stroke-width=".5"/>
<path d="M519.400 149.500 L522.800 148.300 V150.700 Z M649.200 149.500 L645.800 148.300 V150.700 Z" fill="#111"/>
<rect x="571" y="144.300" width="26" height="10.800" rx=".8" fill="#2f86c6"/>
<text x="584" y="151.500" font-size="4.700" font-weight="bold" fill="#fff" text-anchor="middle" font-family="Liberation Sans, sans-serif">74.2mm</text>
<!-- markup -->
<g fill="none" stroke="#f2c21c" stroke-linecap="round" stroke-linejoin="round">
  <path d="M529.600 281 L529.400 223 L636 222.600 L636.400 281.600 M530 281.300 L647 281.300" stroke-width="1.700"/>
  <path d="M543 234.400 L624.400 233.600 L624.600 268.600 L543.400 269 Z" stroke-width="1.500"/>
  <path d="M639.500 360 C648 355 655 347 657 336 C659 322 654 304 640 291.500" stroke-width="1.500"/>
  <path d="M630.500 287.800 L642.500 287.200 M630.500 287.800 L638 296.500" stroke-width="1.500"/>
</g>
<text x="582.800" y="351.600" font-size="7.200" fill="#e2a974" font-family="Liberation Sans, sans-serif">Pocket w/ thru hole</text>
<!-- nav arrows -->
<path d="M493.200 246.400 L487.400 258 L493.200 270" fill="none" stroke="#b9b9b9" stroke-width="1"/>
<path d="M749.400 245.800 L755.600 257.600 L749.400 269.800" fill="none" stroke="#2c6590" stroke-width="1.100"/>
<!-- cursor hand -->
<path d="M742.800 260.600 C742 259 743.600 258.200 744.600 259.400 L746 261 C747.400 260.600 748.600 261.600 748.400 263 C748.200 265 746.600 266 745 265.400 C743.400 264.800 742.600 263.400 742.800 260.600 Z" fill="#fff" stroke="#333" stroke-width=".6"/>
<!-- small triad -->
<path d="M750.600 393 V383.600 M750.600 393 H743.400" stroke="#333" stroke-width=".7" fill="none"/>
<text x="751.400" y="383" font-size="3.200" font-weight="bold" fill="#222" text-anchor="middle" font-family="Liberation Sans, sans-serif">Z</text>
<text x="738.600" y="394.400" font-size="3.200" font-weight="bold" fill="#222" font-family="Liberation Sans, sans-serif">Y</text>
</svg>

<div id="xpright" class="abs"></div>

<!-- viewer bottom toolbar -->
<div class="abs" style="left:590.5px;top:393px;width:26px;height:9.500px;background:#e4e8ec;font-size:4.4px;line-height:9.500px;text-align:center;color:#444">View</div>
<div class="abs" style="left:616.5px;top:393px;width:26px;height:9.500px;background:#a9c9e2;font-size:4.4px;line-height:9.500px;text-align:center;color:#2a4a66">Tools</div>
<svg class="abs" style="left:644.500px;top:394.500px;width:8px;height:7px" viewBox="0 0 8 7"><path d="M4 6 C1 3.800 0.800 2.400 1.400 1.600 C2.200 0.600 3.600 1 4 2 C4.400 1 5.800 0.600 6.600 1.600 C7.200 2.400 7 3.800 4 6 Z" fill="#fff" stroke="#b5b5b5" stroke-width=".6"/></svg>
<div class="abs" style="left:539.500px;top:402.300px;width:165px;height:20.200px;background:#e4e8ec;border:0.5px solid #cdd3d8"></div>
<div class="abs" style="left:540px;top:402.800px;width:38.500px;height:19.500px;background:#fbfbfb"></div>
<svg class="abs" style="left:539px;top:402.500px;width:166px;height:20px" viewBox="539 402.500 166 20">
  <g transform="translate(548.300 411.600) scale(1.250) translate(-548.600 -412)">
  <circle cx="548.600" cy="412" r="3.600" fill="#6fa6d4" stroke="#2c618f" stroke-width="1"/><circle cx="548.600" cy="412" r="1.300" fill="#e8f0f7"/>
  <path d="M544 407.400 l1.200 1.200 M553.200 407.400 l-1.200 1.200 M544 416.600 l1.200 -1.200 M553.200 416.600 l-1.200 -1.200" stroke="#2c618f" stroke-width=".9"/>
  <circle cx="544" cy="407.400" r=".8" fill="#2c618f"/><circle cx="553.200" cy="407.400" r=".8" fill="#2c618f"/><circle cx="544" cy="416.600" r=".8" fill="#2c618f"/><circle cx="553.200" cy="416.600" r=".8" fill="#2c618f"/>
  </g>
  <g transform="translate(565.600 411.400) scale(1.300) translate(-563.600 -411.800)">
  <path d="M560.400 411 C560.400 408 565.600 408 565.600 411 C565.600 413 563.600 413.400 562.600 415.400 C562 413.600 560.400 413 560.400 411 Z" fill="#f3f6f9" stroke="#2c618f" stroke-width=".8"/><path d="M565.800 414.600 l1.600 -1.600 l1.600 1.600 l-1.600 1.600 Z" fill="#2f6ea5"/>
  </g>
  <path d="M573.600 411.200 l1.800 0 l-.9 1.300z" fill="#222"/>
  <g transform="translate(586.600 411.400) scale(1.250) translate(-587 -411.600)">
  <path d="M582.600 411.600 C584.600 408.800 589.400 408.800 591.400 411.600 C589.400 414.400 584.600 414.400 582.600 411.600 Z" fill="#f4f4f4" stroke="#333" stroke-width=".8"/><circle cx="587" cy="411.600" r="1.900" fill="#222"/><circle cx="587.600" cy="411" r=".6" fill="#fff"/>
  </g>
  <g transform="translate(603.800 411.600) scale(1.300) translate(-603 -412)">
  <rect x="599.600" y="408.600" width="6.800" height="6.800" fill="#a9c9e2" stroke="#2c618f" stroke-width=".8" stroke-dasharray="1.600 1"/><rect x="601.400" y="410.400" width="3.200" height="3.200" fill="#3a75a8"/>
  </g>
  <g transform="translate(621 411.600) scale(1.300) translate(-618.800 -412)">
  <circle cx="620" cy="411" r="3" fill="#c5daea" stroke="#2c618f" stroke-width=".9"/><path d="M617.800 413.200 L615.200 416" stroke="#2c618f" stroke-width="1.300"/><rect x="619" y="410" width="2.200" height="2.200" fill="#4d86b7"/>
  </g>
  <g transform="translate(637 411.600) scale(1.300) translate(-635.800 -412.400)">
  <path d="M631 414.600 L633 410.400 L640.600 408.800 L638.400 413.400 Z" fill="#dde2e6" stroke="#555" stroke-width=".7"/><path d="M631 414.600 L638.400 413.400 L638 415.400 L631.400 416.400 Z" fill="#9aa4ad" stroke="#555" stroke-width=".5"/><path d="M634 413 L638 410.500" stroke="#3a75a8" stroke-width="1"/>
  </g>
  <path d="M645.200 411.200 l1.800 0 l-.9 1.300z" fill="#222"/>
  <g transform="translate(658.900 411.400) scale(1.350) translate(-657.900 -412.100)">
  <path d="M653.600 416.400 L654.200 414 L660.400 407.800 L662.200 409.600 L656 415.800 Z" fill="#3f7fb8" stroke="#23598b" stroke-width=".6"/><path d="M653.600 416.400 L654.200 414 L656 415.800 Z" fill="#e8d8b8"/>
  </g>
  <text x="674.600" y="416.400" font-size="11.500" font-family="Liberation Serif, serif" fill="#333" text-anchor="middle">T</text>
  <path d="M679.400 407 V418" stroke="#444" stroke-width=".6"/>
  <rect x="685" y="405" width="14.200" height="14" fill="#a9c9e2"/><rect x="687.200" y="407.600" width="9.800" height="8.600" rx="1" fill="#dfeaf4" stroke="#6a9cc6" stroke-width=".8"/><path d="M690 410 V414 M692.600 410 H694.600 V414" stroke="#6a9cc6" stroke-width=".8" fill="none"/>
</svg>

<!-- ============ status bar ============ -->
<div id="leftedge" class="abs"></div>
<div id="status" class="abs">
  <span class="abs" style="left:2.5px;top:0;letter-spacing:-.05px">SOLIDWORKS</span>
  <span class="abs" style="left:653px;top:0">Editing Part</span>
  <span class="abs" style="left:722.500px;top:0">Custom</span>
  <i class="abs" style="left:745.500px;top:3.600px;border-top:1.500px solid #444;border-left:1.200px solid transparent;border-right:1.200px solid transparent"></i>
  <svg class="abs" style="left:756px;top:1px;width:8px;height:7px" viewBox="0 0 8 7"><circle cx="4" cy="3.500" r="2.600" fill="#ddd" stroke="#444" stroke-width=".7"/><path d="M2.400 3 H5.600" stroke="#444" stroke-width=".8"/></svg>
</div>
</div>
</body>
</html>
